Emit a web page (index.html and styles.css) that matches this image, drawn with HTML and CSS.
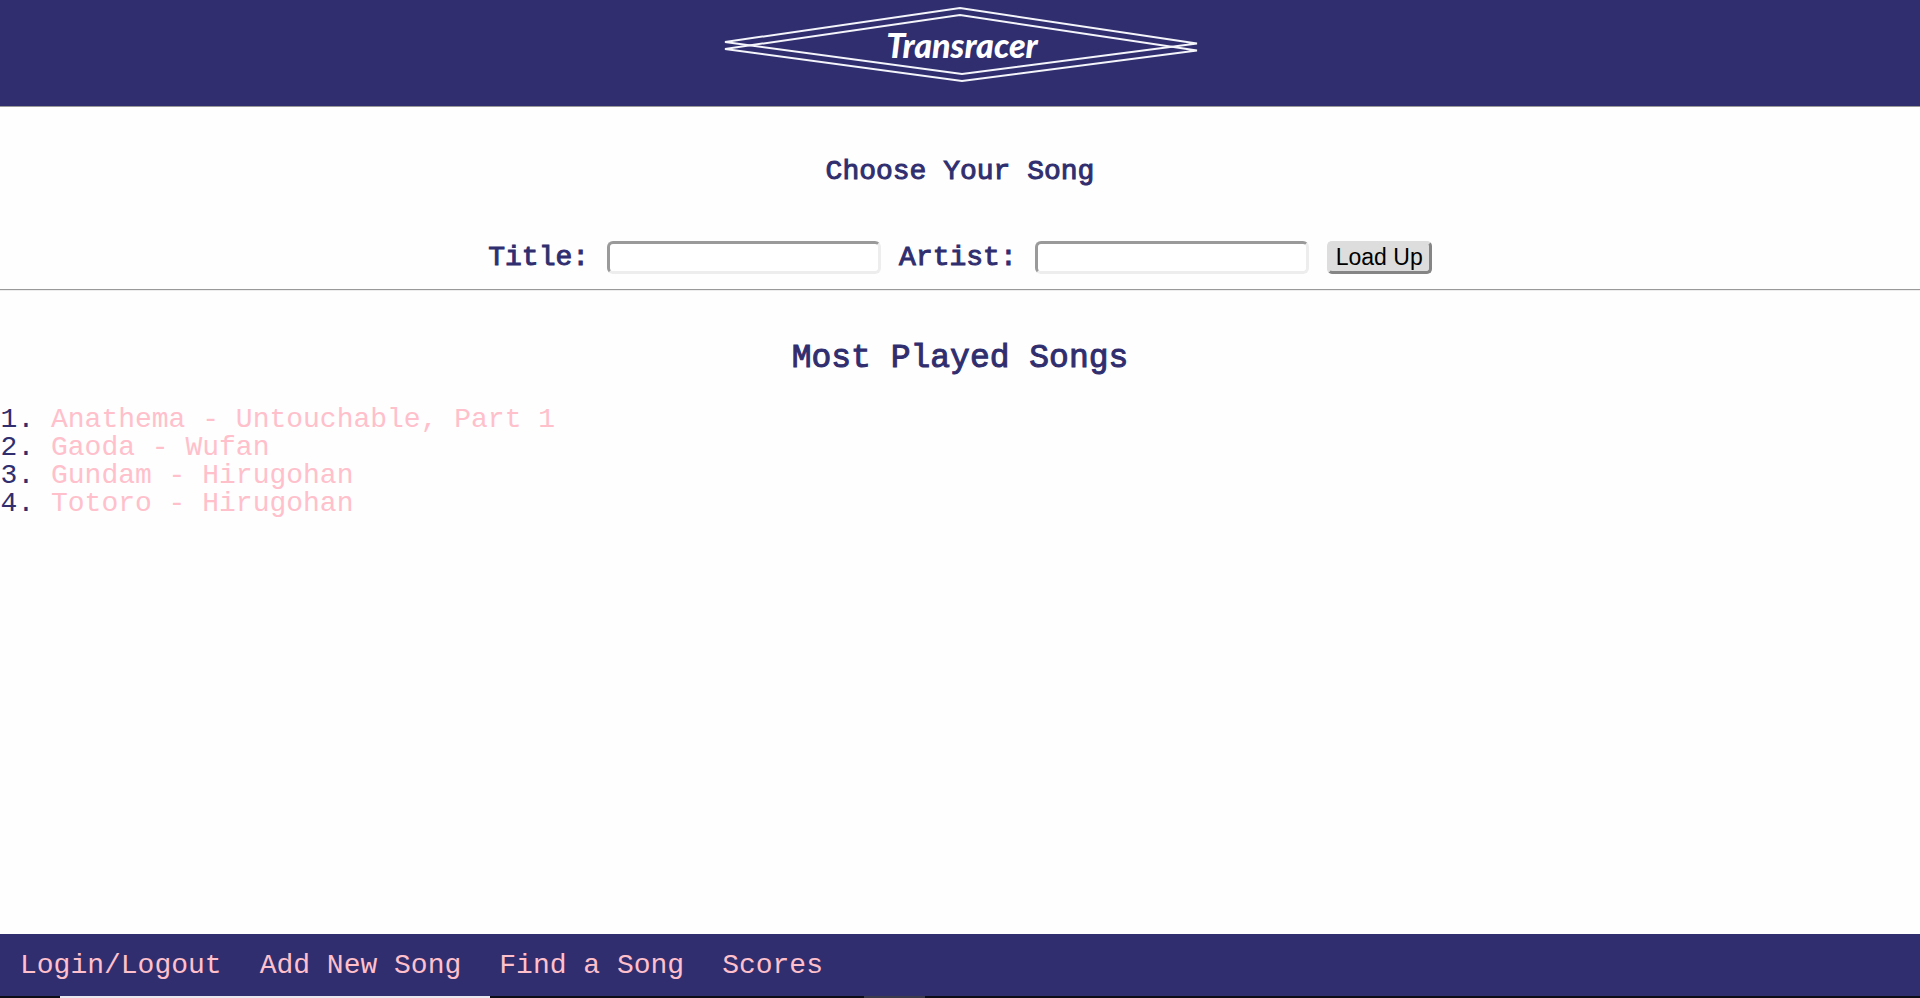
FILE: index.html
```html
<!DOCTYPE html>
<html lang="en">
<head>
<meta charset="utf-8">
<title>Transracer</title>
<link rel="stylesheet" href="styles.css">
</head>
<body>
<header class="banner">
  <svg class="logo" viewBox="0 0 480 88" role="img" aria-label="Transracer">
    <g class="logo-lines">
      <path d="M5 42 L240 8 L477 43.500 L242 74 Z"/>
      <path d="M5 49 L240 15 L477 50.500 L242 81 Z"/>
    </g>
    <text class="logo-name" x="242" y="58">Transracer</text>
  </svg>
</header>
<main class="content">
  <section class="picker">
    <h2 class="picker-title">Choose Your Song</h2>
    <form class="song-form">
      <label for="title">Title:</label>
      <input class="field" id="title" name="title" type="text">
      <label for="artist">Artist:</label>
      <input class="field" id="artist" name="artist" type="text">
      <button class="load" type="submit">Load Up</button>
    </form>
  </section>
  <section class="played">
    <h1 class="played-title">Most Played Songs</h1>
    <ol class="songs">
      <li><a href="#">Anathema - Untouchable, Part 1</a></li>
      <li><a href="#">Gaoda - Wufan</a></li>
      <li><a href="#">Gundam - Hirugohan</a></li>
      <li><a href="#">Totoro - Hirugohan</a></li>
    </ol>
  </section>
</main>
<nav class="bottom-nav">
  <a href="#">Login/Logout</a>
  <a href="#">Add New Song</a>
  <a href="#">Find a Song</a>
  <a href="#">Scores</a>
</nav>
<div class="edge"></div>
</body>
</html>
```

FILE: styles.css
```css
* { box-sizing: border-box; }

body {
  margin: 0;
  min-height: 100vh;
  display: flex;
  flex-direction: column;
  background: #fefefe;
  color: #302e6f;
  font: 28px/28px "Liberation Mono", monospace;
}

a { color: #ffc0cb; text-decoration: none; }

.banner {
  display: flex;
  justify-content: center;
  padding-bottom: 18px;
  background: #302e6f;
  border-bottom: 1px solid #9a9a9a;
}
.logo { display: block; width: 480px; height: 88px; }
.logo-lines { fill: none; stroke: #f4f4fb; stroke-width: 2; }
.logo-name {
  fill: #fff;
  font: italic 900 34px Lato, sans-serif;
  text-anchor: middle;
}

.content { flex: 1; }

.picker {
  padding: 49px 0 15px;
  border-bottom: 2px groove #ededed;
}
.picker-title, .played-title {
  margin: 0;
  text-align: center;
  font-weight: 400;
  -webkit-text-stroke: 1px #302e6f;
}
.picker-title { font-size: 28px; line-height: 32px; }

.song-form {
  display: flex;
  justify-content: center;
  align-items: center;
  gap: 18px;
  margin-top: 53px;
  -webkit-text-stroke: 1px #302e6f;
}
.field {
  width: 274px;
  height: 33px;
  padding: 2px 4px;
  border: 3px solid;
  border-color: #9a9a9a #ededed #ededed #9a9a9a;
  border-radius: 6px;
  background: #fff;
  font: 23px "Liberation Sans", sans-serif;
}
.load {
  width: 105px;
  height: 33px;
  padding: 0;
  border: 3px solid;
  border-color: #ddd #858585 #858585 #ddd;
  border-radius: 5px;
  background: #ddd;
  color: #000;
  font: 23px "Liberation Sans", sans-serif;
  -webkit-text-stroke: 0;
}

.played { padding-top: 48px; }
.played-title { font-size: 33px; line-height: 40px; }
.songs {
  margin: 27px 0 0;
  padding-left: 51px;
}

.bottom-nav {
  display: flex;
  gap: 38px;
  padding: 18px 20px 16px;
  background: #302e6f;
}
.edge {
  height: 2px;
  background: linear-gradient(90deg,
    #0d0d18 60px, #e8e8ee 60px 490px,
    #0d0d18 490px 864px, #3b3a4a 864px 925px, #0d0d18 925px);
}
```
